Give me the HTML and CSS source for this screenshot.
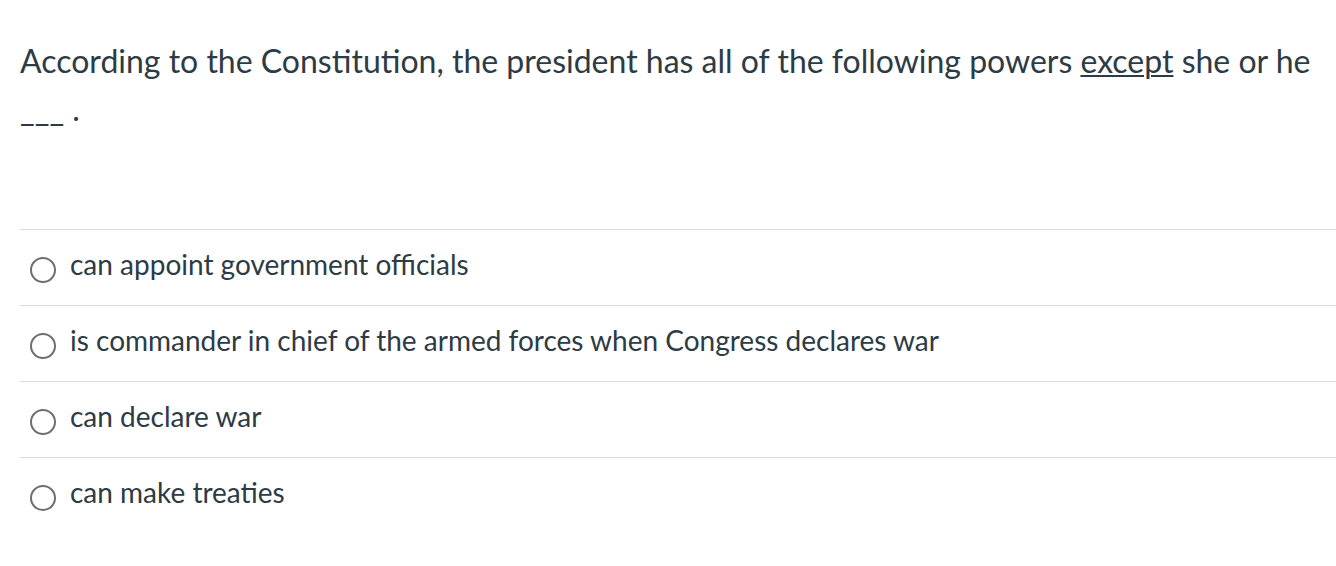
FILE: index.html
```html
<!DOCTYPE html>
<html>
<head>
<meta charset="utf-8">
<link rel="stylesheet" href="styles.css">
</head>
<body>
<div class="quiz">
  <p class="question">According to the Constitution, the president has all of the following powers <u>except</u> she or he ___ .</p>
  <ul class="answers">
    <li class="answer"><span class="radio"></span><span class="label">can appoint government officials</span></li>
    <li class="answer"><span class="radio"></span><span class="label">is commander in chief of the armed forces when Congress declares war</span></li>
    <li class="answer"><span class="radio"></span><span class="label">can declare war</span></li>
    <li class="answer"><span class="radio"></span><span class="label">can make treaties</span></li>
  </ul>
</div>
</body>
</html>
```
FILE: styles.css
```css
html, body {
  margin: 0;
  padding: 0;
  background: #fff;
}
body {
  font-family: Lato, "Liberation Sans", sans-serif;
  color: #2d3b45;
}
.quiz {
  padding: 0 0 0 20px;
}
.question {
  margin: 0;
  padding-top: 37px;
  font-size: 32px;
  line-height: 48px;
  padding-right: 20px;
}
.question u {
  text-decoration-thickness: 2px;
  text-underline-offset: 2px;
}
.answers {
  list-style: none;
  margin: 96px 0 0 0;
  padding: 0;
}
.answer {
  display: flex;
  align-items: center;
  gap: 14px;
  height: 75px;
  border-top: 1px solid #dcdcdc;
  padding-left: 10px;
  font-size: 28px;
}
.radio {
  width: 22px;
  height: 22px;
  border: 2px solid #6e6e6e;
  border-radius: 50%;
  flex: none;
  margin-top: 5px;
}
.label {
  line-height: 34px;
  margin-bottom: 8px;
}
```
